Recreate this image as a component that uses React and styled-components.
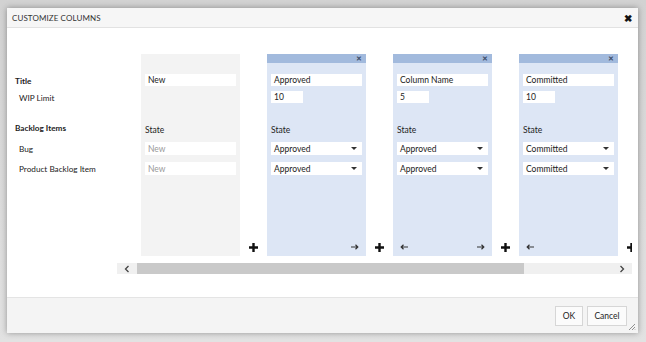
import React from "react";
import styled, { createGlobalStyle } from "styled-components";

const GlobalStyle = createGlobalStyle`
  html, body {
    margin: 0;
    padding: 0;
    background: #d6d6d6;
    font-family: Lato, "Noto Sans", sans-serif;
    color: #222;
  }
`;

const Page = styled.div`
  width: 646px;
  height: 342px;
  padding: 8px 8px 9px 7px;
  box-sizing: border-box;
  background: linear-gradient(#d2d2d2, #e2e2e2);
`;

const Dialog = styled.div`
  width: 631px;
  height: 325px;
  background: #fff;
  display: flex;
  flex-direction: column;
  box-shadow: 0 0 6px rgba(0, 0, 0, 0.35);
  position: relative;
`;

const TitleBar = styled.div`
  height: 19px;
  flex-shrink: 0;
  background: #f6f6f6;
  border-bottom: 1px solid #e2e2e2;
  display: flex;
  align-items: center;
  justify-content: space-between;
  padding: 0 6px 0 5px;
`;

const Title = styled.span`
  font-size: 8px;
  letter-spacing: 0.1px;
  color: #333;
`;

const CloseX = styled.span`
  font-size: 10px;
  font-weight: 700;
  color: #111;
  line-height: 1;
`;

const Body = styled.div`
  flex: 1;
  display: flex;
  padding: 26px 6px 0 0;
`;

const Labels = styled.div`
  width: 110px;
  flex-shrink: 0;
  padding: 21px 0 0 8px;
  box-sizing: border-box;
  display: flex;
  flex-direction: column;
  font-size: 8.2px;
`;

const Label = styled.div`
  height: ${(p) => p.$h || 12}px;
  margin-top: ${(p) => p.$mt || 0}px;
  line-height: ${(p) => p.$h || 12}px;
  padding-left: ${(p) => (p.$bold ? 0 : 4)}px;
  font-weight: ${(p) => (p.$bold ? 700 : 400)};
  white-space: nowrap;
`;

const ScrollArea = styled.div`
  flex: 1;
  display: flex;
  flex-direction: column;
  min-width: 0;
`;

const Viewport = styled.div`
  overflow: hidden;
  height: 202px;
`;

const Strip = styled.div`
  display: flex;
  align-items: stretch;
  padding-left: 24px;
  height: 100%;
`;

const Column = styled.div`
  width: 99px;
  flex-shrink: 0;
  display: flex;
  flex-direction: column;
  background: ${(p) => (p.$fixed ? "#f3f3f3" : "#dde6f5")};
`;

const ColHeader = styled.div`
  height: 9px;
  flex-shrink: 0;
  background: ${(p) => (p.$fixed ? "transparent" : "#a2badd")};
  display: flex;
  align-items: center;
  justify-content: flex-end;
  padding-right: 4px;
  font-size: 7px;
  font-weight: 700;
  color: #3d4f6a;
`;

const ColBody = styled.div`
  flex: 1;
  display: flex;
  flex-direction: column;
  padding: 0 4px 0 4px;
`;

const Field = styled.div`
  height: 12px;
  margin-top: ${(p) => p.$mt || 0}px;
  width: ${(p) => (p.$narrow ? "32px" : "auto")};
  background: #fff;
  font-size: 8.5px;
  line-height: 12px;
  padding-left: 3px;
  color: #222;
  box-sizing: border-box;
`;

const Spacer = styled.div`
  height: ${(p) => p.$h}px;
  flex-shrink: 0;
`;

const StateLabel = styled.div`
  margin-top: 22px;
  height: 10px;
  line-height: 10px;
  font-size: 8.5px;
`;

const Select = styled.div`
  height: 13px;
  margin-top: 7px;
  background: #fff;
  display: flex;
  align-items: center;
  justify-content: space-between;
  padding: 0 5px 0 3px;
  font-size: 8.5px;
  color: ${(p) => (p.$placeholder ? "#9a9a9a" : "#222")};
`;

const Caret = styled.span`
  width: 0;
  height: 0;
  border-left: 3px solid transparent;
  border-right: 3px solid transparent;
  border-top: 3px solid #333;
`;

const MoveRow = styled.div`
  margin-top: auto;
  height: 14px;
  display: flex;
  align-items: center;
  justify-content: space-between;
  padding: 0 3px 2px 3px;
  color: #333;
`;

const AddSlot = styled.div`
  width: 27px;
  flex-shrink: 0;
  display: flex;
  align-items: flex-end;
  justify-content: center;
  padding-bottom: 4px;
`;

const ScrollBar = styled.div`
  margin-top: 7px;
  height: 11px;
  background: #f0f0f0;
  display: flex;
  align-items: center;
`;

const ScrollBtn = styled.div`
  width: 20px;
  display: flex;
  justify-content: center;
  align-items: center;
`;

const Thumb = styled.div`
  height: 11px;
  width: 387px;
  background: #c9c9c9;
`;

const Fill = styled.div`
  flex: 1;
`;

const Footer = styled.div`
  height: 36px;
  flex-shrink: 0;
  background: #f4f4f4;
  border-top: 1px solid #e4e4e4;
  display: flex;
  align-items: center;
  justify-content: flex-end;
  gap: 4px;
  padding-right: 11px;
  box-sizing: border-box;
`;

const Button = styled.button`
  height: 20px;
  min-width: ${(p) => p.$w}px;
  background: #fbfbfb;
  border: 1px solid #d6d6d6;
  font-family: Lato, "Noto Sans", sans-serif;
  font-size: 8.5px;
  color: #222;
  padding: 0 6px;
`;

const Grip = styled.svg`
  position: absolute;
  right: 2px;
  bottom: 2px;
`;

const Plus = () => (
  <svg width="9" height="9" viewBox="0 0 9 9">
    <path d="M3.3 0h2.4v3.3H9v2.4H5.7V9H3.3V5.7H0V3.3h3.3z" fill="#111" />
  </svg>
);

const Arrow = ({ left }) => (
  <svg width="8" height="6" viewBox="0 0 8 6" style={left ? { transform: "scaleX(-1)" } : undefined}>
    <path d="M0 3h6.5M4.5 0.8L6.8 3 4.5 5.2" stroke="#333" strokeWidth="1.2" fill="none" />
  </svg>
);

const Chevron = ({ right }) => (
  <svg width="6" height="8" viewBox="0 0 6 8">
    <path d={right ? "M1.5 1l3 3-3 3" : "M4.5 1l-3 3 3 3"} stroke="#444" strokeWidth="1.3" fill="none" />
  </svg>
);

const columns = [
  { name: "Approved", wip: "10", state: "Approved", prev: false, next: true },
  { name: "Column Name", wip: "5", state: "Approved", prev: true, next: true },
  { name: "Committed", wip: "10", state: "Committed", prev: true, next: false },
];

export default function App() {
  return (
    <>
      <GlobalStyle />
      <Page>
        <Dialog>
          <TitleBar>
            <Title>CUSTOMIZE COLUMNS</Title>
            <CloseX>✖</CloseX>
          </TitleBar>
          <Body>
            <Labels>
              <Label $bold>Title</Label>
              <Label $mt={5}>WIP Limit</Label>
              <Label $bold $mt={19} $h={10}>Backlog Items</Label>
              <Label $mt={10} $h={13}>Bug</Label>
              <Label $mt={7} $h={13}>Product Backlog Item</Label>
            </Labels>
            <ScrollArea>
              <Viewport>
                <Strip>
                  <Column $fixed>
                    <ColHeader $fixed />
                    <ColBody>
                      <Field $mt={11}>New</Field>
                      <Spacer $h={17} />
                      <StateLabel>State</StateLabel>
                      <Select $placeholder>New</Select>
                      <Select $placeholder>New</Select>
                    </ColBody>
                  </Column>
                  {columns.map((c) => (
                    <React.Fragment key={c.name}>
                      <AddSlot>
                        <Plus />
                      </AddSlot>
                      <Column>
                        <ColHeader>✕</ColHeader>
                        <ColBody>
                          <Field $mt={11}>{c.name}</Field>
                          <Field $mt={5} $narrow>{c.wip}</Field>
                          <StateLabel>State</StateLabel>
                          <Select>
                            {c.state}
                            <Caret />
                          </Select>
                          <Select>
                            {c.state}
                            <Caret />
                          </Select>
                          <MoveRow>
                            {c.prev ? <Arrow left /> : <span />}
                            {c.next ? <Arrow /> : <span />}
                          </MoveRow>
                        </ColBody>
                      </Column>
                    </React.Fragment>
                  ))}
                  <AddSlot>
                    <Plus />
                  </AddSlot>
                </Strip>
              </Viewport>
              <ScrollBar>
                <ScrollBtn>
                  <Chevron />
                </ScrollBtn>
                <Thumb />
                <Fill />
                <ScrollBtn>
                  <Chevron right />
                </ScrollBtn>
              </ScrollBar>
            </ScrollArea>
          </Body>
          <Footer>
            <Button $w={28}>OK</Button>
            <Button $w={40}>Cancel</Button>
          </Footer>
          <Grip width="8" height="8" viewBox="0 0 8 8">
            <path d="M7 1L1 7M7 4L4 7M7 6.5L6.5 7" stroke="#777" strokeWidth="0.8" />
          </Grip>
        </Dialog>
      </Page>
    </>
  );
}
